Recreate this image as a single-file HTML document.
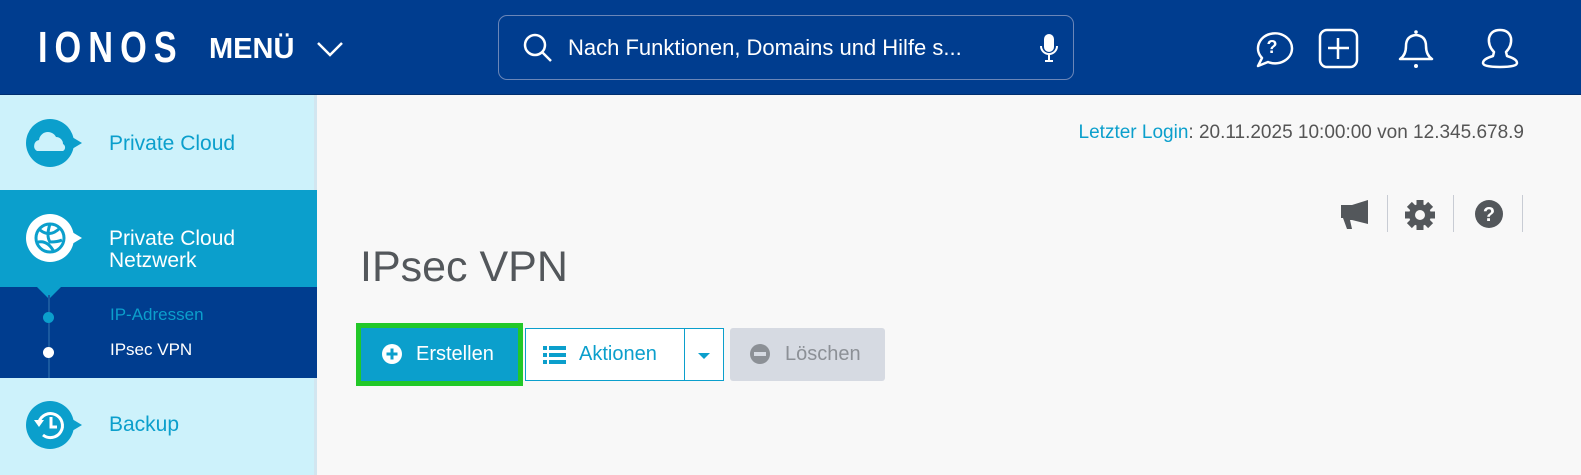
<!DOCTYPE html>
<html><head><meta charset="utf-8"><style>
*{margin:0;padding:0;box-sizing:border-box}
body{width:1581px;height:475px;overflow:hidden;background:#f8f8f8;font-family:"Liberation Sans","DejaVu Sans",sans-serif;position:relative}
.hdr{position:absolute;left:0;top:0;width:1581px;height:95px;background:#003d8f;border-bottom:1px solid #002f70}
.abs{position:absolute}
.side{position:absolute;left:0;top:95px;width:317px;height:380px;background:#cdf2fb;border-right:3px solid #d2e6f0}
.lbl{position:absolute;left:109px;font-size:21px}
</style></head><body>
<div class="hdr">
 <div class="abs" style="left:38px;top:24px;color:#fff;font-size:44px;letter-spacing:9px;font-weight:bold;transform:scaleX(0.78);transform-origin:left;line-height:48px">IONOS</div>
 <div class="abs" style="left:209px;top:31px;color:#fff;font-size:29px;font-weight:bold;line-height:36px">MENÜ</div>
 <svg class="abs" style="left:316px;top:40px" width="28" height="18"><path d="M2 3 L14 15 L26 3" fill="none" stroke="#fff" stroke-width="2.5"/></svg>
 <div class="abs" style="left:498px;top:15px;width:576px;height:65px;border:1px solid #6a86b8;border-radius:9px"></div>
 <svg class="abs" style="left:522px;top:32px" width="32" height="32"><circle cx="13" cy="13" r="10" fill="none" stroke="#fff" stroke-width="2.5"/><path d="M20 20 L29 29" stroke="#fff" stroke-width="2.5"/></svg>
 <div class="abs" style="left:568px;top:34px;color:#fff;font-size:22px;line-height:28px">Nach Funktionen, Domains und Hilfe s...</div>
 <svg class="abs" style="left:1038px;top:32px" width="22" height="32"><rect x="6" y="2" width="10" height="18" rx="5" fill="#fff"/><path d="M3 14 a8 8 0 0 0 16 0" fill="none" stroke="#fff" stroke-width="2"/><path d="M11 22 V28 M7 29 H15" stroke="#fff" stroke-width="2"/></svg>
 <svg class="abs" style="left:1250px;top:28px" width="44" height="42"><path d="M8 38 L12 30 A17 15 0 1 1 18 34 Z" fill="none" stroke="#fff" stroke-width="2.5" stroke-linejoin="round"/><text x="22" y="25" fill="#fff" font-size="18" font-weight="bold" text-anchor="middle" font-family="Liberation Sans">?</text></svg>
 <svg class="abs" style="left:1318px;top:28px" width="42" height="42"><rect x="2" y="2" width="37" height="37" rx="7" fill="none" stroke="#fff" stroke-width="2.5"/><path d="M20 10 V31 M10 20 H31" stroke="#fff" stroke-width="2.5"/></svg>
 <svg class="abs" style="left:1396px;top:28px" width="40" height="42"><path d="M4 31 Q10 27 10 18 Q10 8 20 7 Q30 8 30 18 Q30 27 36 31 Z" fill="none" stroke="#fff" stroke-width="2.5" stroke-linejoin="round"/><circle cx="20" cy="4" r="1.8" fill="#fff"/><circle cx="20" cy="38" r="2" fill="#fff"/></svg>
 <svg class="abs" style="left:1480px;top:28px" width="40" height="42"><path d="M14 24 Q8 18 9 10 Q11 2 20 2 Q29 2 31 10 Q32 18 26 24 L27 28 Q37 31 37 35 Q37 39 20 39 Q3 39 3 35 Q3 31 13 28 Z" fill="none" stroke="#fff" stroke-width="2.5" stroke-linejoin="round"/></svg>
</div>
<div class="side">
 <div class="abs" style="left:0;top:0;width:314px;height:95px;background:#cdf2fb"></div>
 <svg class="abs" style="left:26px;top:24px" width="58" height="50"><circle cx="24" cy="24" r="24" fill="#0b9fcc"/><path d="M46 18 L56 24 L46 30Z" fill="#0b9fcc"/><path d="M11 32 a6 6 0 0 1 2-11 a9 9 0 0 1 17-3 a7 7 0 0 1 7 7 a4 4 0 0 1 0 7Z" fill="#cdf2fb"/></svg>
 <div class="lbl" style="top:37px;color:#0b9fcc">Private Cloud</div>
 <div class="abs" style="left:0;top:95px;width:317px;height:97px;background:#0b9fcc"></div>
 <svg class="abs" style="left:26px;top:119px" width="58" height="50"><circle cx="24" cy="24" r="24" fill="#fff"/><path d="M46 18 L56 24 L46 30Z" fill="#fff"/><circle cx="24" cy="24" r="14" fill="none" stroke="#0b9fcc" stroke-width="3"/><path d="M14 16 Q24 24 34 14 M12 28 Q22 26 28 38 M24 10 Q20 22 24 28 Q32 28 36 26" fill="none" stroke="#0b9fcc" stroke-width="3"/></svg>
 <div class="lbl" style="top:133px;color:#fff;line-height:22px">Private Cloud<br>Netzwerk</div>
 <div class="abs" style="left:0;top:192px;width:317px;height:91px;background:#003d8f"></div>
 <div class="abs" style="left:37px;top:192px;border-left:12px solid transparent;border-right:12px solid transparent;border-top:12px solid #0b9fcc"></div>
 <div class="abs" style="left:48px;top:200px;width:2px;height:83px;background:#1a5aa0"></div>
 <div class="abs" style="left:43px;top:217px;width:11px;height:11px;border-radius:50%;background:#0b9fcc"></div>
 <div class="abs" style="left:43px;top:252px;width:11px;height:11px;border-radius:50%;background:#fff"></div>
 <div class="abs" style="left:110px;top:210px;color:#0b9fcc;font-size:17px">IP-Adressen</div>
 <div class="abs" style="left:110px;top:245px;color:#fff;font-size:17px">IPsec VPN</div>
 <svg class="abs" style="left:26px;top:306px" width="58" height="50"><circle cx="24" cy="24" r="24" fill="#0b9fcc"/><path d="M46 18 L56 24 L46 30Z" fill="#0b9fcc"/><path d="M13 21 A12 12 0 1 1 17 34" fill="none" stroke="#fff" stroke-width="3"/><path d="M8 19 L13 26 L18 19Z" fill="#fff"/><path d="M25 16 V26 H31" fill="none" stroke="#fff" stroke-width="3"/></svg>
 <div class="lbl" style="top:318px;color:#0b9fcc">Backup</div>
</div>
<div class="abs" style="right:57px;top:122px;font-size:19px;color:#555"><span style="color:#0b9fcc">Letzter Login</span>: 20.11.2025 10:00:00 von 12.345.678.9</div>
<svg class="abs" style="left:1338px;top:198px" width="34" height="34"><path d="M3 7 H14 L30 2 V26 L14 22 H12 L14 31 H9 L5 20 H3Z" fill="#53575b"/></svg>
<div class="abs" style="left:1387px;top:195px;width:1px;height:37px;background:#c8ccd4"></div>
<svg class="abs" style="left:1403px;top:198px" width="34" height="34"><g fill="#53575b" transform="translate(17 17)"><circle r="11"/><g id="t"><rect x="-3.5" y="-15" width="7" height="8"/></g><use href="#t" transform="rotate(45)"/><use href="#t" transform="rotate(90)"/><use href="#t" transform="rotate(135)"/><use href="#t" transform="rotate(180)"/><use href="#t" transform="rotate(225)"/><use href="#t" transform="rotate(270)"/><use href="#t" transform="rotate(315)"/><circle r="5" fill="#f8f8f8"/></g></svg>
<div class="abs" style="left:1453px;top:195px;width:1px;height:37px;background:#c8ccd4"></div>
<svg class="abs" style="left:1474px;top:199px" width="30" height="30"><circle cx="15" cy="15" r="14" fill="#53575b"/><text x="15" y="22" fill="#fff" font-size="20" font-weight="bold" text-anchor="middle" font-family="Liberation Sans">?</text></svg>
<div class="abs" style="left:1522px;top:195px;width:1px;height:37px;background:#c8ccd4"></div>
<div class="abs" style="left:360px;top:243px;font-size:43px;color:#53575b">IPsec VPN</div>
<div class="abs" style="left:356px;top:323px;width:167px;height:63px;background:#22c828"></div>
<div class="abs" style="left:361px;top:328px;width:157px;height:53px;background:#0b9fcc"></div>
<svg class="abs" style="left:381px;top:343px" width="22" height="22"><circle cx="11" cy="11" r="10" fill="#fff"/><path d="M11 5.5 V16.5 M5.5 11 H16.5" stroke="#0b9fcc" stroke-width="3"/></svg>
<div class="abs" style="left:416px;top:343px;color:#fff;font-size:20px">Erstellen</div>
<div class="abs" style="left:525px;top:328px;width:199px;height:53px;border:1px solid #0b9fcc;background:#fff"></div>
<div class="abs" style="left:684px;top:328px;width:1px;height:53px;background:#0b9fcc"></div>
<svg class="abs" style="left:543px;top:345px" width="24" height="20"><g fill="#0b9fcc"><rect x="0" y="1" width="4" height="4"/><rect x="6" y="1" width="17" height="4"/><rect x="0" y="8" width="4" height="4"/><rect x="6" y="8" width="17" height="4"/><rect x="0" y="15" width="4" height="4"/><rect x="6" y="15" width="17" height="4"/></g></svg>
<div class="abs" style="left:579px;top:343px;color:#0b9fcc;font-size:20px">Aktionen</div>
<div class="abs" style="left:698px;top:353px;border-left:6px solid transparent;border-right:6px solid transparent;border-top:6px solid #0b9fcc"></div>
<div class="abs" style="left:730px;top:328px;width:155px;height:53px;background:#d6dae2;border-radius:3px"></div>
<svg class="abs" style="left:749px;top:343px" width="22" height="22"><circle cx="11" cy="11" r="10" fill="#8c9096"/><rect x="5" y="9" width="12" height="4" fill="#d6dae2"/></svg>
<div class="abs" style="left:785px;top:343px;color:#8c9096;font-size:20px">Löschen</div>
</body></html>
